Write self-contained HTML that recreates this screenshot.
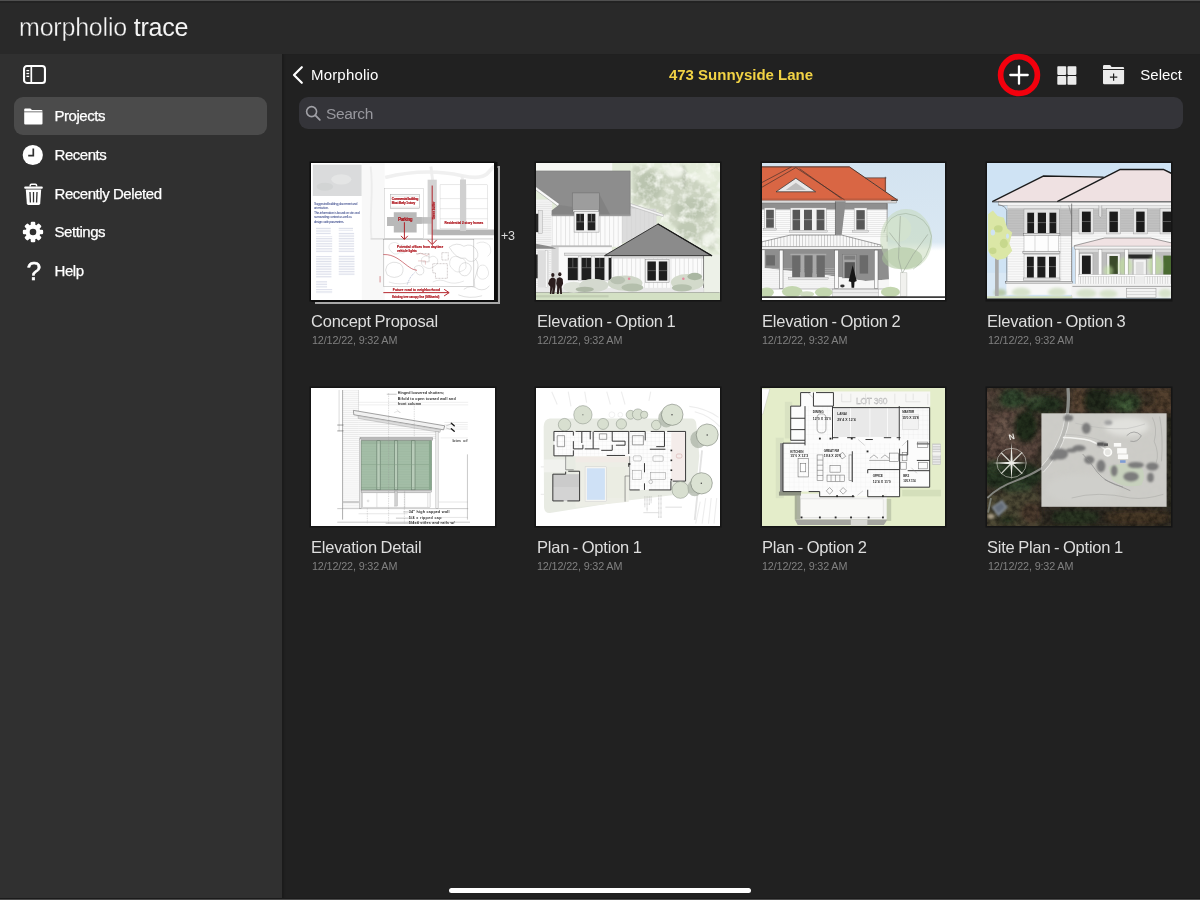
<!DOCTYPE html>
<html lang="en">
<head>
<meta charset="utf-8">
<title>Morpholio Trace - 473 Sunnyside Lane</title>
<style>
html,body{margin:0;padding:0;}
body{width:1200px;height:900px;overflow:hidden;background:#212121;font-family:"Liberation Sans",Arial,sans-serif;color:#fff;position:relative;-webkit-font-smoothing:antialiased;}
.abs{position:absolute;}
#topbar{left:0;top:0;width:1200px;height:53.5px;background:#292929;}
#topline{left:0;top:0;width:1200px;height:1px;background:#505050;box-shadow:0 1.5px 0 0.5px #232323;}
#botline{left:0;top:899px;width:1200px;height:1px;background:#4c4c4c;box-shadow:0 -1px 0 0 #1b1b1b;}
#brand{left:19px;top:11.5px;font-size:25px;line-height:30px;color:#f4f4f4;white-space:nowrap;letter-spacing:-0.2px;}
#brand .l{-webkit-text-stroke:0.36px #292929;}
#brand .r{}
#sidebar{left:0;top:53.5px;width:281.5px;height:847px;background:#303030;}
#sel{left:14px;top:97px;width:253px;height:38px;border-radius:9px;background:#4b4b4b;}
.navt{left:54.5px;font-size:15px;line-height:20px;color:#fff;white-space:nowrap;letter-spacing:-0.45px;-webkit-text-stroke:0.25px #fff;}
#main{left:281.5px;top:53.5px;width:919px;height:847px;background:#212121;box-shadow:inset 3px 0 2px -1px #1c1c1c;}
#back{left:311px;top:65px;font-size:15px;line-height:20px;color:#fff;letter-spacing:0.18px;}
#title{left:591px;top:65px;width:300px;text-align:center;font-size:15px;line-height:20px;font-weight:bold;color:#f2d345;white-space:nowrap;}
#select{left:1140.3px;top:65px;font-size:15px;line-height:20px;color:#fff;}
#search{left:299px;top:97.25px;width:883.5px;height:31.6px;border-radius:9px;background:#343439;}
#searcht{left:326px;top:104px;font-size:15.5px;line-height:20px;color:#98989e;letter-spacing:-0.35px;}
.thumb{width:183.5px;height:137.5px;overflow:hidden;background:#fff;box-shadow:0 0 0 1.5px #151515;}
#t1{width:183px;box-shadow:0 0 0 1.5px #0c0c0c,2px 0.5px 0 1.5px #0c0c0c;}
#stack{left:315px;top:166.25px;width:181px;height:133.5px;border:2px solid #a8a8a8;box-sizing:content-box;}
.thumb svg{display:block;width:100%;height:100%;}
.ttl{font-size:16.5px;line-height:20px;color:#dedede;white-space:nowrap;letter-spacing:-0.22px;word-spacing:-0.7px;}
.dt{font-size:10.8px;line-height:14px;color:#808080;white-space:nowrap;letter-spacing:-0.14px;margin-top:-0.5px;}
#home{left:449px;top:888px;width:302px;height:5px;border-radius:3px;background:#fff;}
</style>
</head>
<body>
<div id="wrap" style="position:absolute;left:0;top:0;width:1200px;height:900px;will-change:transform;">
<div id="topbar" class="abs"></div>
<div id="topline" class="abs"></div>
<div id="brand" class="abs"><span class="l">morpholio</span> <span class="r">trace</span></div>
<div id="sidebar" class="abs"></div>
<div id="main" class="abs"></div>

<!-- sidebar -->
<svg class="abs" style="left:23px;top:65px" width="24" height="20" viewBox="0 0 24 20">
  <rect x="1.05" y="1.05" width="20.9" height="16.9" rx="2.8" fill="none" stroke="#fff" stroke-width="2.1"/>
  <line x1="8.3" y1="1" x2="8.3" y2="18" stroke="#fff" stroke-width="1.7"/>
  <line x1="3.4" y1="5.6" x2="6.2" y2="5.6" stroke="#fff" stroke-width="1.3"/>
  <line x1="3.4" y1="8.5" x2="6.2" y2="8.5" stroke="#fff" stroke-width="1.3"/>
  <line x1="3.4" y1="11.4" x2="6.2" y2="11.4" stroke="#fff" stroke-width="1.3"/>
</svg>
<div id="sel" class="abs"></div>
<!-- folder -->
<svg class="abs" style="left:23px;top:107px" width="21" height="19" viewBox="0 0 21 19">
  <path d="M1.2 2.5 Q1.2 1.4 2.3 1.4 H7 Q7.8 1.4 8.2 2.1 L8.7 3 H18.4 Q19.5 3 19.5 4.1 V4.4 H1.2 Z" fill="#fff"/>
  <path d="M1.2 5.3 H19.5 V16.4 Q19.5 17.5 18.4 17.5 H2.3 Q1.2 17.5 1.2 16.4 Z" fill="#fff"/>
</svg>
<div class="abs navt" style="top:106px">Projects</div>
<!-- clock -->
<svg class="abs" style="left:22.2px;top:143.7px" width="22" height="22" viewBox="0 0 22 22">
  <circle cx="10.8" cy="11" r="10.1" fill="#fff"/>
  <path d="M11.3 4.5 V11.6 H6.2" fill="none" stroke="#303030" stroke-width="1.7"/>
</svg>
<div class="abs navt" style="top:145px">Recents</div>
<!-- trash -->
<svg class="abs" style="left:22.8px;top:182.8px" width="22" height="24" viewBox="0 0 22 24">
  <path d="M7.2 3.6 V2.6 Q7.2 1.3 8.5 1.3 H12.3 Q13.6 1.3 13.6 2.6 V3.6" fill="none" stroke="#fff" stroke-width="1.5"/>
  <rect x="1.2" y="3.4" width="18.6" height="2.4" rx="1" fill="#fff"/>
  <path d="M2.8 6.6 H18.2 L17.2 20.6 Q17.1 22 15.7 22 H5.3 Q3.9 22 3.8 20.6 Z" fill="#fff"/>
  <line x1="7" y1="9" x2="7.4" y2="19.4" stroke="#303030" stroke-width="1.3"/>
  <line x1="10.5" y1="9" x2="10.5" y2="19.4" stroke="#303030" stroke-width="1.3"/>
  <line x1="14" y1="9" x2="13.6" y2="19.4" stroke="#303030" stroke-width="1.3"/>
</svg>
<div class="abs navt" style="top:183.5px">Recently Deleted</div>
<!-- gear -->
<svg class="abs" style="left:21.3px;top:220.3px" width="24" height="24" viewBox="-12 -12 24 24">
  <g fill="#fff">
    <circle r="7.4"/>
    <g id="teeth">
      <rect x="-2.3" y="-10.15" width="4.6" height="20.3" rx="1.2"/>
      <rect x="-2.3" y="-10.15" width="4.6" height="20.3" rx="1.2" transform="rotate(45)"/>
      <rect x="-2.3" y="-10.15" width="4.6" height="20.3" rx="1.2" transform="rotate(90)"/>
      <rect x="-2.3" y="-10.15" width="4.6" height="20.3" rx="1.2" transform="rotate(135)"/>
    </g>
  </g>
  <circle r="3.3" fill="#303030"/>
</svg>
<div class="abs navt" style="top:222px">Settings</div>
<!-- help -->
<div class="abs" style="left:26.5px;top:255.5px;font-size:26.5px;line-height:30px;color:#fff;-webkit-text-stroke:0.5px #fff;">?</div>
<div class="abs navt" style="top:261px">Help</div>

<!-- main header -->
<svg class="abs" style="left:291px;top:65px" width="14" height="20" viewBox="0 0 14 20">
  <path d="M10.8 2.2 L3 10 L10.8 17.8" fill="none" stroke="#fff" stroke-width="2.2" stroke-linecap="round" stroke-linejoin="round"/>
</svg>
<div id="back" class="abs">Morpholio</div>
<div id="title" class="abs">473 Sunnyside Lane</div>
<!-- plus with red ring -->
<svg class="abs" style="left:995.75px;top:52px" width="46" height="46" viewBox="0 0 46 46">
  <circle cx="23" cy="23" r="18.4" fill="none" stroke="#f3000d" stroke-width="5.7"/>
  <path d="M23 14.3 V31.7 M14.3 23 H31.7" stroke="#fff" stroke-width="2.3" stroke-linecap="round"/>
</svg>
<!-- grid icon -->
<svg class="abs" style="left:1056.5px;top:65.5px" width="20" height="19" viewBox="0 0 20 19">
  <rect x="0.3" y="0.3" width="8.9" height="8.6" rx="0.8" fill="#ebebeb"/>
  <rect x="10.5" y="0.3" width="8.9" height="8.6" rx="0.8" fill="#ebebeb"/>
  <rect x="0.3" y="10.1" width="8.9" height="8.6" rx="0.8" fill="#ebebeb"/>
  <rect x="10.5" y="10.1" width="8.9" height="8.6" rx="0.8" fill="#ebebeb"/>
</svg>
<!-- folder plus -->
<svg class="abs" style="left:1102px;top:64px" width="23" height="21" viewBox="0 0 23 21">
  <path d="M1 2.4 Q1 1.1 2.3 1.1 H7.6 Q8.4 1.1 8.8 1.8 L9.5 3 H20.8 Q22.1 3 22.1 4.3 V4.9 H1 Z" fill="#ebebeb"/>
  <path d="M1 5.9 H22.1 V18.9 Q22.1 20.2 20.8 20.2 H2.3 Q1 20.2 1 18.9 Z" fill="#ebebeb"/>
  <path d="M11.6 9.4 V16.8 M7.9 13.1 H15.3" stroke="#212121" stroke-width="1.2"/>
</svg>
<div id="select" class="abs">Select</div>

<!-- search -->
<div id="search" class="abs"></div>
<svg class="abs" style="left:305px;top:105px" width="17" height="17" viewBox="0 0 17 17">
  <circle cx="6.6" cy="6.6" r="5" fill="none" stroke="#a0a0a6" stroke-width="1.6"/>
  <line x1="10.4" y1="10.4" x2="14.8" y2="14.8" stroke="#a0a0a6" stroke-width="1.8" stroke-linecap="round"/>
</svg>
<div id="searcht" class="abs">Search</div>

<!-- THUMBS -->
<div id="stack" class="abs"></div>
<!--T1--><div class="abs thumb" id="t1" style="left:311.25px;top:162.5px"><svg preserveAspectRatio="none" viewBox="34.2 40.9 1000.9 750" font-family="Liberation Sans, sans-serif">
<defs>
<pattern id="p1l" width="100" height="9" patternUnits="userSpaceOnUse"><rect width="100" height="4.5" fill="#dde0eb"/></pattern>
</defs>
<rect x="0" y="0" width="1100" height="850" fill="#fff"/>
<rect x="312" y="0" width="125" height="850" fill="#f8f8f8"/>
<!-- faint top roads -->
<path d="M440 120 C560 90 700 75 860 110 S1000 70 1040 60" fill="none" stroke="#f0f0f0" stroke-width="20"/>
<path d="M690 60 L700 140 M860 110 L866 150" fill="none" stroke="#eeeeee" stroke-width="16"/>
<path d="M360 60 C380 200 350 330 365 450" fill="none" stroke="#ececec" stroke-width="10"/>
<!-- grey photo box -->
<rect x="44" y="50" width="267" height="171" fill="#dadbdc"/>
<ellipse cx="200" cy="130" rx="55" ry="28" fill="#e4e5e5"/>
<ellipse cx="110" cy="170" rx="45" ry="22" fill="#d2d4d4"/>
<!-- blue heading -->
<g fill="#2a3a80" font-size="19">
<text x="50" y="270" textLength="238">Suggested building placement and</text>
<text x="50" y="294" textLength="82">orientation.</text>
<text x="50" y="319" textLength="250">This information is based on site and</text>
<text x="50" y="343" textLength="208">surrounding context as well as</text>
<text x="50" y="367" textLength="165">design code parameters.</text>
</g>
<!-- text columns -->
<g fill="url(#p1l)">
<rect x="62" y="392" width="80" height="38"/><rect x="62" y="440" width="88" height="92"/><rect x="62" y="548" width="84" height="120"/><rect x="62" y="682" width="60" height="40"/><rect x="62" y="728" width="88" height="24"/>
<rect x="186" y="392" width="78" height="20"/><rect x="186" y="420" width="84" height="110"/><rect x="186" y="545" width="86" height="112"/>
</g>
<!-- roads -->
<rect x="672" y="132" width="50" height="300" fill="#d3d3d3"/>
<rect x="850" y="132" width="32" height="280" fill="#d0d0d0"/>
<rect x="700" y="404" width="360" height="31" fill="#b6b6b6"/>
<rect x="600" y="336" width="95" height="36" fill="#c2c2c2"/>
<!-- plan outline -->
<rect x="436" y="180" width="214" height="272" fill="none" stroke="#b5b5b5" stroke-width="2"/>
<line x1="360" y1="455" x2="1030" y2="455" stroke="#9a9a9a" stroke-width="2.5"/>
<!-- parking -->
<path d="M487 310 H612 V336 H640 V372 H612 V420 H487 V385 H450 V336 H487 Z" fill="#b9b9b9"/>
<!-- building -->
<rect x="470" y="212" width="157" height="78" fill="#fff" stroke="#9c9c9c" stroke-width="2.5"/>
<g stroke="#aaa" stroke-width="1.5"><line x1="470" y1="222" x2="627" y2="222"/><line x1="470" y1="282" x2="627" y2="282"/></g>
<!-- residential grid -->
<g fill="#fff" stroke="#c2c2c2" stroke-width="2">
<rect x="740" y="160" width="110" height="240"/><rect x="882" y="160" width="118" height="240"/>
</g>
<g stroke="#c6c6c6" stroke-width="2">
<line x1="740" y1="235" x2="1000" y2="235"/><line x1="740" y1="290" x2="1000" y2="290"/><line x1="740" y1="345" x2="1000" y2="345"/>
</g>
<rect x="850" y="132" width="32" height="280" fill="#d0d0d0"/>
<!-- site boundary -->
<rect x="432" y="458" width="493" height="257" fill="none" stroke="#8f8f8f" stroke-width="2"/>
<!-- tree outlines -->
<g fill="none" stroke="#b4b4b4" stroke-width="2.2">
<path d="M850 600 q20 -25 45 -10 q25 15 10 45 q-15 30 -45 18 q-25 -15 -10 -53z"/>
<path d="M790 500 q40 -30 80 -5 q45 -20 70 20 q20 40 -15 60 q-30 10 -45 -15 q-50 10 -90 -60z"/>
<path d="M450 600 q30 -30 70 -10 q30 20 10 60 q-40 30 -80 0 q-15 -25 0 -50z"/>
<path d="M600 610 q25 -20 45 0 q15 25 -5 40 q-30 10 -40 -40z"/>
<path d="M870 730 q40 -30 80 0 q40 10 60 -20 M840 760 q60 25 130 5"/>
<path d="M930 560 q30 30 10 80 q-20 40 -10 80"/>
</g>
<g fill="none" stroke="#bdbdbd" stroke-width="2">
<path d="M470 480 q30 -15 50 10 q30 -10 40 20 q-10 30 -40 20 q-30 20 -50 -10 q-20 -20 0 -40z"/>
<path d="M640 560 q20 -20 45 -5 q25 -15 40 10 q10 30 -20 40 q-20 20 -45 5 q-30 -10 -20 -50z"/>
<path d="M800 560 q25 -20 50 0 q30 0 30 30 q10 30 -20 40 q-30 15 -50 -10 q-30 -20 -10 -60z"/>
<path d="M960 600 q30 -10 40 20 q15 30 -10 50 q-30 15 -45 -15 q-10 -35 15 -55z"/>
<path d="M700 690 q40 -20 80 0 q40 15 90 -5 M460 690 q60 20 120 0"/>
<path d="M940 480 q40 -20 70 10 q20 40 -10 60"/>
</g>
<g fill="none" stroke="#a33" stroke-width="2" opacity="0.7"><path d="M612 540 q20 -14 40 0 q16 12 30 -4 M620 575 h40 v20"/></g>
<g fill="none" stroke="#7a6a6a" stroke-width="2" stroke-dasharray="5 3">
<path d="M700 590 H780 V670 H715 V640 H700 Z"/><path d="M610 535 H680 V580 H640"/><path d="M750 530 h35 v40 h-35z"/>
</g>
<path d="M600 640 Q575 660 560 705" fill="none" stroke="#6a78a8" stroke-width="2.5" stroke-dasharray="6 4"/>
<!-- red annotations -->
<g fill="none" stroke="#ad1119" stroke-width="5" stroke-linecap="round" stroke-linejoin="round">
<path d="M545 366 V454 M528 440 L545 458 L562 440"/>
<path d="M697 166 V482 M674 462 L697 486 L720 462"/>
<path d="M432 748 H784 M764 731 L790 748 L764 765"/>
<path d="M432 540 C490 538 525 575 562 602 S600 620 612 626" stroke-width="3"/>
<path d="M412 660 V690" stroke-width="2.5"/>
</g>
<g fill="#ad1119" stroke="#ad1119" stroke-width="0.9" font-weight="bold">
<text x="476" y="241" font-size="17" textLength="146">Commercial building</text>
<text x="476" y="265" font-size="17" textLength="128">Most likely 1 story</text>
<text x="510" y="356" font-size="25" textLength="80">Parking</text>
<text transform="translate(714 348) rotate(-90)" font-size="16" textLength="96">Green buffer</text>
<text x="764" y="372" font-size="17" textLength="212">Residential 2 story homes</text>
<text x="505" y="504" font-size="17" textLength="252">Potential offices from daytime</text>
<text x="505" y="529" font-size="17" textLength="108">vehicle lights</text>
<text x="482" y="741" font-size="18" textLength="258">Future road to neighborhood</text>
<text x="478" y="778" font-size="14" textLength="258">Existing tree canopy line (GIS/aerial)</text>
</g>
</svg></div>
<!--T2--><div class="abs thumb" id="t2" style="left:536.25px;top:162.5px"><svg preserveAspectRatio="none" viewBox="34.2 40.9 1000.9 750">
<defs>
<pattern id="p2v" width="24" height="10" patternUnits="userSpaceOnUse"><rect x="0" width="3" height="10" fill="#d2d2d2"/></pattern>
<pattern id="p2h" width="10" height="12" patternUnits="userSpaceOnUse"><rect y="0" width="10" height="2.5" fill="#dadada"/></pattern>
<filter id="b2" x="-10%" y="-10%" width="120%" height="120%"><feGaussianBlur stdDeviation="9"/></filter>
<filter id="b2s" x="-10%" y="-10%" width="120%" height="120%"><feGaussianBlur stdDeviation="3"/></filter>
<filter id="n2" x="0" y="0" width="100%" height="100%"><feTurbulence type="fractalNoise" baseFrequency="0.022" numOctaves="3" seed="11" result="t"/><feColorMatrix in="t" type="matrix" values="0 0 0 0 0.93  0 0 0 0 0.95  0 0 0 0 0.89  2.4 0 0 0 -1.05"/></filter>
<clipPath id="c2"><path d="M552 40 H1050 V560 L992 546 L700 374 L730 322 L552 262 Z"/></clipPath>
</defs>
<!-- background foliage -->
<rect x="0" y="0" width="1100" height="850" fill="#e3ebd9"/>
<rect x="30" y="40" width="420" height="45" fill="#f7f8f4"/>
<g filter="url(#b2)">
<path d="M560 60 Q640 40 720 90 Q800 60 860 120 Q960 130 1000 220 Q1040 300 1000 380 Q1040 460 1000 520 L900 470 L780 380 L700 300 L560 260 Z" fill="#cbd3c0"/>
<ellipse cx="650" cy="170" rx="70" ry="80" fill="#bac4af"/>
<ellipse cx="880" cy="290" rx="90" ry="60" fill="#bcc6b1"/>
<ellipse cx="860" cy="410" rx="60" ry="50" fill="#bfc9b4"/>
<ellipse cx="790" cy="90" rx="50" ry="30" fill="#eef2e8"/>
<ellipse cx="960" cy="120" rx="50" ry="40" fill="#e9efe0"/>
<ellipse cx="980" cy="450" rx="40" ry="30" fill="#eef2e8"/>
<path d="M830 50 L850 100 L835 180" fill="none" stroke="#aab3a0" stroke-width="14"/>
</g>
<g clip-path="url(#c2)"><rect x="540" y="30" width="520" height="540" filter="url(#n2)"/></g>
<rect x="940" y="540" width="110" height="210" fill="#edf1e8"/>
<!-- right shaded wall behind -->
<path d="M500 270 L555 262 L730 322 L690 330 L690 400 L500 480 Z" fill="#d0d0d0"/>
<path d="M500 290 H690 V470 H500 Z" fill="#dcdcdc"/>
<rect x="500" y="290" width="190" height="180" fill="url(#p2v)" opacity="0.9"/>
<path d="M548 262 L730 322 L728 334 L548 276 Z" fill="#f4f4f4" stroke="#9a9a9a" stroke-width="2"/>
<!-- left wall -->
<rect x="30" y="240" width="92" height="490" fill="#f3f3f3"/>
<rect x="30" y="240" width="92" height="490" fill="url(#p2h)"/>
<!-- upper wall -->
<rect x="118" y="322" width="384" height="176" fill="#fbfbfb"/>
<rect x="118" y="322" width="384" height="176" fill="url(#p2v)"/>
<!-- lower wall left -->
<rect x="118" y="498" width="330" height="240" fill="#fafafa"/>
<rect x="118" y="498" width="40" height="240" fill="#d9d9d9"/>
<rect x="118" y="490" width="330" height="10" fill="#bdbdbd"/>
<rect x="190" y="532" width="230" height="14" fill="#e2e2e2" stroke="#8a8a8a" stroke-width="2"/>
<!-- main roof -->
<path d="M30 84 H548 V326 H120 L120 300 L160 268 L30 172 Z" fill="#8d8d8d"/>
<path d="M120 300 L160 270 L380 300 L380 326 H120 Z" fill="#7f7f7f" opacity="0.6"/>
<path d="M380 210 L440 326 H380 Z" fill="#7a7a7a" opacity="0.55"/>
<path d="M30 84 H548 V326" fill="none" stroke="#777" stroke-width="3"/>
<rect x="120" y="322" width="430" height="9" fill="#9b9b9b"/>
<!-- left gable fascia -->
<path d="M30 168 L162 264 L152 276 L30 186 Z" fill="#fafafa" stroke="#666" stroke-width="2"/>
<!-- dormer -->
<rect x="232" y="204" width="148" height="98" fill="#9d9d9d" stroke="#6f6f6f" stroke-width="3"/>
<rect x="236" y="296" width="140" height="12" fill="#e8e8e8" stroke="#777" stroke-width="2"/>
<!-- upper window -->
<rect x="242" y="306" width="136" height="112" fill="#f2f2f2" stroke="#8a8a8a" stroke-width="2.5"/>
<rect x="254" y="318" width="42" height="90" fill="#222"/>
<rect x="316" y="318" width="42" height="90" fill="#222"/>
<g stroke="#bdbdbd" stroke-width="2.5"><line x1="254" y1="362" x2="296" y2="362"/><line x1="316" y1="362" x2="358" y2="362"/><line x1="275" y1="318" x2="275" y2="360"/><line x1="337" y1="318" x2="337" y2="360"/></g>
<!-- left edge dark windows -->
<rect x="30" y="318" width="18" height="100" fill="#2a2a2a"/>
<rect x="30" y="540" width="14" height="130" fill="#2a2a2a"/>
<rect x="48" y="300" width="22" height="125" fill="#e6e6e6" stroke="#999" stroke-width="2"/>
<!-- left porch bits -->
<path d="M30 480 L120 498 L145 508 L30 508 Z" fill="#8a8a8a"/>
<rect x="44" y="520" width="60" height="200" fill="#dedede"/>
<rect x="84" y="520" width="14" height="200" fill="#f7f7f7" stroke="#aaa" stroke-width="1.5"/>
<!-- lower left windows -->
<g fill="#1f1f1f">
<rect x="208" y="558" width="54" height="122"/><rect x="282" y="558" width="54" height="122"/><rect x="356" y="558" width="52" height="122"/><rect x="430" y="558" width="16" height="122"/>
</g>
<g stroke="#9a9a9a" stroke-width="2.5"><line x1="208" y1="612" x2="262" y2="612"/><line x1="282" y1="612" x2="336" y2="612"/><line x1="356" y1="612" x2="408" y2="612"/><line x1="235" y1="558" x2="235" y2="610"/><line x1="309" y1="558" x2="309" y2="610"/><line x1="382" y1="558" x2="382" y2="610"/></g>
<g fill="#f0f0f0" stroke="#999" stroke-width="1.5"><rect x="264" y="552" width="16" height="132"/><rect x="338" y="552" width="16" height="132"/><rect x="410" y="552" width="18" height="132"/></g>
<!-- lower right wall -->
<rect x="446" y="548" width="504" height="196" fill="#fbfbfb"/>
<rect x="446" y="548" width="504" height="196" fill="url(#p2v)"/>
<rect x="446" y="548" width="504" height="14" fill="#d6d6d6"/>
<line x1="948" y1="548" x2="948" y2="745" stroke="#555" stroke-width="4"/>
<line x1="446" y1="552" x2="446" y2="700" stroke="#666" stroke-width="3"/>
<!-- lower roof -->
<path d="M408 546 L700 374 L992 546 Z" fill="#8b8b8b" stroke="#2c2c2c" stroke-width="5" stroke-linejoin="round"/>
<path d="M700 374 L992 546" stroke="#1c1c1c" stroke-width="7" stroke-linecap="round"/>
<!-- lower right window -->
<rect x="630" y="566" width="130" height="126" fill="#f1f1f1" stroke="#8a8a8a" stroke-width="2.5"/>
<rect x="642" y="578" width="46" height="104" fill="#1f1f1f"/>
<rect x="704" y="578" width="46" height="104" fill="#1f1f1f"/>
<g stroke="#9a9a9a" stroke-width="2.5"><line x1="642" y1="628" x2="688" y2="628"/><line x1="704" y1="628" x2="750" y2="628"/></g>
<!-- base -->
<rect x="30" y="722" width="920" height="26" fill="#e9e9e9"/>
<line x1="30" y1="748" x2="1036" y2="748" stroke="#8f9688" stroke-width="4"/>
<!-- ground -->
<rect x="30" y="750" width="1020" height="50" fill="#d3e0c4"/>
<rect x="30" y="762" width="400" height="12" fill="#b9c4ac" opacity="0.7"/>
<!-- bushes -->
<g filter="url(#b2s)">
<ellipse cx="240" cy="718" rx="58" ry="30" fill="#dfe3da"/>
<ellipse cx="350" cy="708" rx="80" ry="36" fill="#d4d9cf"/>
<ellipse cx="520" cy="696" rx="95" ry="42" fill="#cfd6c8"/>
<ellipse cx="480" cy="680" rx="40" ry="22" fill="#b9c2b2"/>
<ellipse cx="560" cy="720" rx="60" ry="22" fill="#b4bfac"/>
<ellipse cx="860" cy="692" rx="90" ry="46" fill="#d3dacb"/>
<ellipse cx="900" cy="660" rx="40" ry="20" fill="#aab7a2"/>
<ellipse cx="830" cy="722" rx="55" ry="20" fill="#b5c0ad"/>
<circle cx="542" cy="672" r="7" fill="#e48aa0"/><circle cx="838" cy="672" r="7" fill="#e48aa0"/>
<ellipse cx="300" cy="730" rx="50" ry="14" fill="#aeb8a6"/>
</g>
<!-- people -->
<g fill="#2b1d1d">
<ellipse cx="126" cy="652" rx="9" ry="11"/><path d="M108 676 Q126 656 142 676 L140 716 L134 756 H122 L124 716 L118 756 H110 L112 716 L100 700 Z"/>
<ellipse cx="164" cy="648" rx="9" ry="11"/><path d="M148 672 Q164 654 180 674 L182 700 L174 716 L176 756 H166 L164 720 L158 756 H148 L150 716 L144 700 Z"/>
</g>
</svg></div>
<!--T3--><div class="abs thumb" id="t3" style="left:761.5px;top:162.5px"><svg preserveAspectRatio="none" viewBox="35.4 40.9 1000.9 750">
<defs>
<pattern id="p3h" width="10" height="11" patternUnits="userSpaceOnUse"><rect width="10" height="2.2" fill="#d8d8d8"/></pattern>
<pattern id="p3v" width="17" height="10" patternUnits="userSpaceOnUse"><rect width="3" height="10" fill="#b5b5b5"/></pattern>
<linearGradient id="g3s" x1="0" y1="0" x2="0" y2="1"><stop offset="0" stop-color="#d3e3f0"/><stop offset="0.9" stop-color="#dae8f3"/><stop offset="1" stop-color="#fff"/></linearGradient>
<filter id="b3" x="-10%" y="-10%" width="120%" height="120%"><feGaussianBlur stdDeviation="4"/></filter>
</defs>
<rect x="0" y="0" width="1100" height="850" fill="#fff"/>
<rect x="30" y="40" width="1020" height="480" fill="url(#g3s)"/>
<!-- upper wall -->
<rect x="30" y="245" width="690" height="260" fill="#fbfbfb"/>
<rect x="30" y="245" width="690" height="200" fill="url(#p3h)"/>
<rect x="30" y="245" width="690" height="50" fill="#8f8f8f"/>
<rect x="30" y="245" width="740" height="14" fill="#d9d9d9" stroke="#666" stroke-width="2"/>
<path d="M436 250 H492 L470 432 H436 Z" fill="#8c8c8c"/>
<line x1="436" y1="250" x2="436" y2="440" stroke="#444" stroke-width="3"/>
<line x1="718" y1="262" x2="718" y2="470" stroke="#555" stroke-width="3"/>
<!-- roof -->
<path d="M30 60 H512 L776 244 H30 Z" fill="#d96644"/>
<path d="M600 122 H712 V200 Z" fill="#d96644"/>
<path d="M598 122 H714 M708 116 V196" stroke="#3a3a3a" stroke-width="3.5" fill="none"/>
<path d="M30 62 H512 L776 244 L740 246" fill="none" stroke="#2e2a28" stroke-width="4.5" stroke-linejoin="round"/>
<path d="M30 176 L220 66 L486 242 M30 150 L196 62 M240 72 L470 236" fill="none" stroke="#3a2e2a" stroke-width="3.5"/>
<path d="M30 238 H776" stroke="#8a4a38" stroke-width="3"/>
<!-- dormer vent -->
<path d="M112 198 L220 124 L328 198 Z" fill="#e8e8e8" stroke="#333" stroke-width="4" stroke-linejoin="round"/>
<path d="M165 188 L220 148 L276 188 Z" fill="#bdbdbd"/>
<!-- upper windows -->
<g fill="#f4f4f4" stroke="#8d8d8d" stroke-width="2">
<rect x="48" y="286" width="60" height="118"/><rect x="190" y="286" width="196" height="124"/><rect x="538" y="286" width="70" height="128"/>
</g>
<g fill="#575757">
<rect x="58" y="296" width="42" height="98"/><rect x="202" y="296" width="42" height="112"/><rect x="264" y="296" width="44" height="112"/><rect x="332" y="296" width="44" height="112"/><rect x="550" y="298" width="46" height="106"/>
</g>
<g stroke="#c8c8c8" stroke-width="3"><line x1="58" y1="345" x2="100" y2="345"/><line x1="202" y1="350" x2="376" y2="350"/><line x1="550" y1="350" x2="596" y2="350"/></g>
<g fill="#f4f4f4"><rect x="244" y="296" width="20" height="112"/><rect x="308" y="296" width="24" height="112"/></g>
<rect x="186" y="408" width="206" height="10" fill="#e3e3e3" stroke="#888" stroke-width="1.5"/>
<rect x="528" y="408" width="90" height="10" fill="#e3e3e3" stroke="#888" stroke-width="1.5"/>
<rect x="44" y="398" width="70" height="9" fill="#e3e3e3" stroke="#888" stroke-width="1.5"/>
<!-- porch shadow wall -->
<path d="M30 508 H722 L728 676 L600 684 L380 652 L30 612 Z" fill="#8e8e8e"/>
<path d="M30 612 L380 652 L600 684 L728 676 V730 H30 Z" fill="#f6f6f6"/>
<rect x="30" y="612" width="420" height="110" fill="url(#p3h)" opacity="0.8"/>
<!-- lower windows -->
<g fill="#6a6a6a">
<rect x="58" y="544" width="48" height="56"/><rect x="200" y="544" width="46" height="122"/><rect x="266" y="544" width="46" height="122"/><rect x="332" y="544" width="46" height="122"/><rect x="568" y="544" width="46" height="100"/>
</g>
<g fill="#a9a9a9"><rect x="246" y="540" width="20" height="126"/><rect x="312" y="540" width="20" height="126"/><rect x="190" y="536" width="196" height="8"/></g>
<rect x="180" y="664" width="216" height="14" fill="#e6e6e6" stroke="#888" stroke-width="1.5"/>
<rect x="476" y="540" width="74" height="128" fill="#a2a2a2" stroke="#707070" stroke-width="2"/>
<rect x="486" y="582" width="56" height="86" fill="#585858"/>
<rect x="484" y="546" width="60" height="22" fill="#7d7d7d"/>
<!-- porch roof -->
<path d="M30 472 L190 434 H470 L690 490 V506 H30 Z" fill="#f8f8f8"/>
<path d="M30 472 L190 434 H470 L690 490 V498 H30 Z" fill="url(#p3v)"/>
<path d="M30 472 L190 434 H470 L690 490" fill="none" stroke="#555" stroke-width="3"/>
<rect x="30" y="496" width="662" height="16" fill="#efefef" stroke="#666" stroke-width="2.5"/>
<!-- columns -->
<g fill="#fafafa" stroke="#5f5f5f" stroke-width="2.5">
<rect x="130" y="516" width="20" height="210"/><rect x="432" y="516" width="20" height="210"/><rect x="648" y="516" width="20" height="210"/>
</g>
<rect x="36" y="516" width="14" height="100" fill="#f5f5f5"/>
<!-- person -->
<path d="M530 598 L552 684 L540 690 L538 722 H524 L522 690 L508 686 Z" fill="#161616"/>
<ellipse cx="474" cy="712" rx="12" ry="8" fill="#333"/>
<!-- steps -->
<rect x="420" y="728" width="252" height="44" fill="#ededed" stroke="#9a9a9a" stroke-width="2"/>
<line x1="420" y1="748" x2="672" y2="748" stroke="#aaa" stroke-width="2"/>
<line x1="30" y1="728" x2="730" y2="728" stroke="#777" stroke-width="2.5"/>
<!-- tree -->
<g>
<ellipse cx="822" cy="458" rx="142" ry="166" fill="#c4d8b6" opacity="0.5"/>
<ellipse cx="800" cy="560" rx="110" ry="60" fill="#a9c399" opacity="0.55" filter="url(#b3)"/>
<ellipse cx="780" cy="400" rx="70" ry="70" fill="#d5e4cc" opacity="0.6" filter="url(#b3)"/>
<path d="M700 420 Q720 320 820 316 Q940 330 960 440 Q950 560 860 620" fill="none" stroke="#8fa08a" stroke-width="3" opacity="0.8"/>
<path d="M800 770 L800 640 L780 560 L790 330 M802 640 L860 540 L940 430 M792 500 L730 420" fill="none" stroke="#9aa596" stroke-width="4" opacity="0.85"/>
<rect x="792" y="640" width="34" height="130" fill="#f1f1ee" stroke="#a5a9a0" stroke-width="2"/>
</g>
<!-- bushes -->
<g fill="#c3d6af" filter="url(#b3)">
<ellipse cx="62" cy="746" rx="38" ry="26"/><ellipse cx="200" cy="742" rx="56" ry="30"/><ellipse cx="372" cy="746" rx="48" ry="26"/><ellipse cx="736" cy="744" rx="52" ry="28"/>
<ellipse cx="280" cy="756" rx="40" ry="16" fill="#cfdcc0"/>
</g>
<!-- bottom line -->
<rect x="30" y="768" width="1020" height="9" fill="#2a2a2a"/>
<rect x="30" y="777" width="1020" height="20" fill="#fcfcfc"/>
</svg></div>
<!--T4--><div class="abs thumb" id="t4" style="left:987px;top:162.5px"><svg preserveAspectRatio="none" viewBox="38.2 40.9 1000.9 750">
<defs>
<pattern id="p4h" width="10" height="9" patternUnits="userSpaceOnUse"><rect width="10" height="2" fill="#d9d9d9"/></pattern>
<pattern id="p4g" width="10" height="9" patternUnits="userSpaceOnUse"><rect width="10" height="2" fill="#a9a9a9"/></pattern>
<pattern id="p4r" width="14" height="10" patternUnits="userSpaceOnUse"><rect width="3" height="10" fill="#bdbdbd"/></pattern>
<filter id="b4" x="-20%" y="-20%" width="140%" height="140%"><feGaussianBlur stdDeviation="9"/></filter>
</defs>
<rect x="0" y="0" width="1100" height="850" fill="#cfe3f4"/>
<rect x="30" y="640" width="130" height="140" fill="#d9e8f5"/>
<!-- upper wall grey -->
<rect x="150" y="262" width="900" height="180" fill="#c2c2c2"/>
<rect x="150" y="262" width="900" height="180" fill="url(#p4g)" opacity="0.7"/>
<!-- fascia -->
<rect x="100" y="250" width="950" height="22" fill="#f4f4f4" stroke="#777" stroke-width="2"/>
<rect x="150" y="272" width="900" height="16" fill="#e9e9e9"/>
<!-- lower-left wall white -->
<rect x="150" y="440" width="352" height="262" fill="#fbfbfb"/>
<rect x="150" y="440" width="352" height="262" fill="url(#p4h)"/>
<rect x="500" y="418" width="550" height="80" fill="#fafafa"/>
<rect x="500" y="418" width="550" height="40" fill="url(#p4h)"/>
<!-- downspout/left edge -->
<path d="M100 268 Q140 275 146 300 V700" fill="none" stroke="#555" stroke-width="3"/>
<line x1="500" y1="262" x2="500" y2="770" stroke="#4a4a4a" stroke-width="3.5"/>
<line x1="440" y1="272" x2="440" y2="700" stroke="#bdbdbd" stroke-width="2"/>
<!-- roofs -->
<path d="M70 250 L345 112 L672 118 L430 250 Z" fill="#efe1e2"/>
<path d="M430 250 L765 76 L1000 76 L1050 100 V250 Z" fill="#efe1e2"/>
<path d="M70 250 L345 112 L672 118" fill="none" stroke="#1a1a1a" stroke-width="8" stroke-linejoin="round" stroke-linecap="round"/>
<path d="M424 250 L765 76 L1000 76 L1050 100" fill="none" stroke="#1a1a1a" stroke-width="8" stroke-linejoin="round" stroke-linecap="round"/>
<path d="M66 253 H1050" stroke="#3a3a3a" stroke-width="5"/>
<!-- upper-left windows -->
<rect x="240" y="292" width="192" height="140" fill="#e2e2e2" stroke="#8c8c8c" stroke-width="2"/>
<g fill="#1d1d1d"><rect x="258" y="312" width="38" height="112"/><rect x="314" y="312" width="46" height="112"/><rect x="378" y="312" width="38" height="112"/></g>
<g stroke="#a6a6a6" stroke-width="2.5"><line x1="258" y1="366" x2="416" y2="366"/></g>
<g fill="#e6e6e6"><rect x="296" y="312" width="18" height="112"/><rect x="360" y="312" width="18" height="112"/></g>
<rect x="236" y="424" width="200" height="12" fill="#e4e4e4" stroke="#666" stroke-width="2.5"/>
<!-- balcony panel -->
<rect x="240" y="436" width="190" height="90" fill="#fdfdfd" stroke="#8a8a8a" stroke-width="2"/>
<g stroke="#9a9a9a" stroke-width="2"><line x1="300" y1="436" x2="300" y2="526"/><line x1="372" y1="436" x2="372" y2="526"/></g>
<rect x="234" y="522" width="202" height="14" fill="#e8e8e8" stroke="#666" stroke-width="2.5"/>
<!-- lower-left windows -->
<rect x="240" y="540" width="192" height="136" fill="#f1f1f1" stroke="#8c8c8c" stroke-width="2"/>
<g fill="#1d1d1d"><rect x="256" y="552" width="38" height="114"/><rect x="312" y="552" width="46" height="114"/><rect x="376" y="552" width="38" height="114"/></g>
<line x1="256" y1="606" x2="414" y2="606" stroke="#a6a6a6" stroke-width="2.5"/>
<g fill="#f1f1f1"><rect x="294" y="552" width="18" height="114"/><rect x="358" y="552" width="18" height="114"/></g>
<rect x="236" y="668" width="200" height="12" fill="#e4e4e4" stroke="#777" stroke-width="2"/>
<!-- upper-right windows -->
<g fill="#e4e4e4" stroke="#8c8c8c" stroke-width="2">
<rect x="540" y="288" width="80" height="140"/><rect x="690" y="288" width="78" height="140"/><rect x="836" y="288" width="78" height="140"/><rect x="982" y="288" width="70" height="140"/>
</g>
<g fill="#1b1b1b"><rect x="556" y="306" width="48" height="112"/><rect x="706" y="306" width="46" height="112"/><rect x="852" y="306" width="46" height="112"/><rect x="996" y="306" width="50" height="112"/></g>
<g stroke="#9c9c9c" stroke-width="2.5"><line x1="556" y1="360" x2="604" y2="360"/><line x1="706" y1="360" x2="752" y2="360"/><line x1="852" y1="360" x2="898" y2="360"/><line x1="996" y1="360" x2="1046" y2="360"/></g>
<path d="M648 272 V330 L656 338 L664 330 V272" fill="#e2e2e2" stroke="#777" stroke-width="2"/>
<path d="M484 272 L500 330" stroke="#777" stroke-width="3"/>
<!-- porch interior -->
<rect x="520" y="500" width="530" height="160" fill="#bdbdbd"/>
<rect x="520" y="500" width="530" height="26" fill="#dcdcdc"/>
<rect x="806" y="540" width="140" height="22" fill="#2b2b2b"/>
<g fill="#f0f0f0" stroke="#8c8c8c" stroke-width="2"><rect x="544" y="534" width="72" height="118"/><rect x="692" y="534" width="72" height="118"/></g>
<rect x="556" y="546" width="48" height="100" fill="#1d1d1d"/>
<rect x="706" y="548" width="46" height="98" fill="#3a4a2a"/>
<rect x="1000" y="546" width="50" height="106" fill="#4a6a32"/>
<rect x="836" y="566" width="70" height="130" fill="#f3f3f3" stroke="#9a9a9a" stroke-width="2"/>
<rect x="850" y="580" width="42" height="70" fill="#dedede"/>
<rect x="812" y="566" width="18" height="86" fill="#d6d6d6"/><rect x="912" y="566" width="18" height="86" fill="#d6d6d6"/>
<!-- plants on porch -->
<g filter="url(#b4)" opacity="0.55">
<ellipse cx="792" cy="606" rx="38" ry="52" fill="#bfe595"/><ellipse cx="956" cy="600" rx="40" ry="56" fill="#bfe595"/><ellipse cx="700" cy="630" rx="26" ry="30" fill="#c8e8a5"/>
</g>
<!-- porch roof -->
<path d="M514 492 L680 450 H930 L1050 478 V498 H514 Z" fill="#f0e2e3" stroke="#555" stroke-width="3" stroke-linejoin="round"/>
<rect x="514" y="494" width="540" height="16" fill="#f5f5f5" stroke="#777" stroke-width="2"/>
<!-- columns -->
<g fill="#fcfcfc" stroke="#8a8a8a" stroke-width="2">
<rect x="520" y="512" width="20" height="206"/><rect x="645" y="512" width="20" height="206"/><rect x="790" y="512" width="18" height="206"/><rect x="940" y="512" width="18" height="206"/>
</g>
<!-- railing -->
<rect x="538" y="652" width="512" height="64" fill="#f7f7f7"/>
<rect x="538" y="660" width="512" height="50" fill="url(#p4r)"/>
<rect x="538" y="650" width="512" height="8" fill="#fdfdfd" stroke="#999" stroke-width="1.5"/>
<rect x="846" y="656" width="52" height="60" fill="#ededed"/>
<!-- foundation -->
<rect x="144" y="690" width="360" height="70" fill="#f7f7f7"/>
<rect x="140" y="686" width="364" height="10" fill="#ececec" stroke="#555" stroke-width="2.5"/>
<rect x="498" y="700" width="552" height="76" fill="#f2f2f2"/>
<line x1="504" y1="714" x2="1050" y2="714" stroke="#666" stroke-width="3"/>
<!-- steps -->
<rect x="800" y="726" width="160" height="50" fill="#f3f3f3" stroke="#8a8a8a" stroke-width="2.5"/>
<g stroke="#aaa" stroke-width="2"><line x1="800" y1="742" x2="960" y2="742"/><line x1="800" y1="758" x2="960" y2="758"/></g>
<!-- bushes -->
<g fill="#d6e2ca" filter="url(#b4)">
<ellipse cx="225" cy="746" rx="52" ry="24"/><ellipse cx="420" cy="746" rx="50" ry="24"/><ellipse cx="580" cy="752" rx="55" ry="24"/><ellipse cx="700" cy="754" rx="50" ry="22"/><ellipse cx="1010" cy="752" rx="36" ry="24"/><ellipse cx="110" cy="748" rx="34" ry="20" fill="#b7c9a8"/>
</g>
<!-- left tree -->
<rect x="82" y="556" width="20" height="210" fill="#a9a9a9"/>
<g fill="#dbe7a6">
<path d="M44 320 L70 300 L96 330 L130 340 L150 400 L176 420 L160 480 L176 520 L140 560 L96 570 L60 548 L44 520 Z"/>
</g>
<g fill="#c3d588" opacity="0.8"><ellipse cx="100" cy="400" rx="24" ry="20"/><ellipse cx="130" cy="480" rx="22" ry="26"/><ellipse cx="70" cy="520" rx="20" ry="18"/></g>
<g fill="#cfe3f4"><ellipse cx="70" cy="420" rx="12" ry="16"/><ellipse cx="150" cy="440" rx="8" ry="14"/></g>
<!-- ground -->
<rect x="30" y="768" width="474" height="12" fill="#cfdcb8"/>
<rect x="30" y="780" width="1020" height="20" fill="#1c1c1c"/>
</svg></div>
<!--T5--><div class="abs thumb" id="t5" style="left:311px;top:388.25px"><svg preserveAspectRatio="none" viewBox="32.7 34 1000.9 750" font-family="Liberation Sans, sans-serif">
<defs>
<pattern id="p5h" width="10" height="11" patternUnits="userSpaceOnUse"><rect width="10" height="2" fill="#dcdcdc"/></pattern>
<pattern id="p5g" width="10" height="9" patternUnits="userSpaceOnUse"><rect width="10" height="2" fill="#93ad97"/></pattern>
</defs>
<rect x="0" y="0" width="1100" height="850" fill="#fff"/>
<!-- left column with siding -->
<rect x="206" y="45" width="88" height="646" fill="#fafafa"/>
<rect x="206" y="45" width="88" height="646" fill="url(#p5h)"/>
<line x1="205" y1="45" x2="205" y2="752" stroke="#6a6a6a" stroke-width="3"/>
<line x1="186" y1="45" x2="186" y2="270" stroke="#9a9a9a" stroke-width="2"/>
<line x1="292" y1="45" x2="292" y2="160" stroke="#bdbdbd" stroke-width="2"/>
<path d="M176 236 H210 M176 268 H210" stroke="#555" stroke-width="3"/>
<rect x="206" y="652" width="88" height="8" fill="#bdbdbd"/>
<!-- background horizontals -->
<g stroke="#d4d4d4" stroke-width="2"><line x1="292" y1="112" x2="890" y2="112"/><line x1="292" y1="126" x2="890" y2="126"/></g>
<g stroke="#cfcfcf" stroke-width="2"><line x1="760" y1="222" x2="888" y2="222"/><line x1="760" y1="234" x2="888" y2="234"/><line x1="760" y1="246" x2="888" y2="246"/><line x1="760" y1="258" x2="888" y2="258"/><line x1="740" y1="306" x2="888" y2="306"/></g>
<!-- wall below roof -->
<path d="M292 190 L724 262 V312 H292 Z" fill="#fbfbfb"/>
<path d="M292 200 L724 270 V312 H292 Z" fill="url(#p5h)"/>
<rect x="300" y="304" width="396" height="16" fill="#b9b9b9" stroke="#7a7a7a" stroke-width="2"/>
<!-- roof -->
<path d="M264 156 L762 240 L756 262 L266 180 Z" fill="#f1f1f1" stroke="#5a5a5a" stroke-width="3" stroke-linejoin="round"/>
<path d="M290 186 L740 262 L736 276 L290 200 Z" fill="#dedede" stroke="#8a8a8a" stroke-width="2"/>
<!-- posts -->
<rect x="714" y="270" width="12" height="420" fill="#f4f4f4" stroke="#8a8a8a" stroke-width="2"/>
<rect x="296" y="312" width="12" height="380" fill="#e9e9e9" stroke="#8a8a8a" stroke-width="2"/>
<!-- green shutters -->
<rect x="306" y="322" width="384" height="268" fill="#a4bea7"/>
<rect x="306" y="322" width="384" height="268" fill="url(#p5g)" opacity="0.55"/>
<g fill="#b7cbb8" stroke="#5d7562" stroke-width="3">
<rect x="392" y="322" width="18" height="268"/><rect x="488" y="322" width="18" height="268"/><rect x="582" y="322" width="18" height="268"/>
</g>
<g stroke="#7f9c84" stroke-width="2.5"><line x1="306" y1="452" x2="690" y2="452"/><line x1="306" y1="578" x2="690" y2="578"/><line x1="306" y1="334" x2="690" y2="334"/></g>
<rect x="306" y="322" width="384" height="268" fill="none" stroke="#6d7f70" stroke-width="3"/>
<rect x="676" y="322" width="14" height="268" fill="#88a78d"/>
<!-- base panel -->
<rect x="306" y="592" width="384" height="10" fill="#dadada" stroke="#777" stroke-width="2"/>
<rect x="314" y="606" width="368" height="78" fill="#fefefe" stroke="#8f8f8f" stroke-width="2"/>
<g stroke="#aaa" stroke-width="2"><line x1="392" y1="606" x2="392" y2="684"/><line x1="544" y1="592" x2="544" y2="690"/><line x1="670" y1="606" x2="670" y2="684"/></g>
<rect x="490" y="596" width="14" height="82" fill="#d0d0d0" stroke="#888" stroke-width="1.5"/>
<circle cx="344" cy="650" r="5" fill="none" stroke="#999" stroke-width="1.5"/>
<!-- ground lines -->
<g stroke="#8a8a8a" stroke-width="2.5"><line x1="176" y1="692" x2="890" y2="692"/><line x1="176" y1="766" x2="900" y2="766"/></g>
<g stroke="#bdbdbd" stroke-width="2"><line x1="730" y1="656" x2="888" y2="656"/><line x1="292" y1="720" x2="560" y2="720"/><line x1="740" y1="740" x2="888" y2="740"/></g>
<!-- dimension lines -->
<line x1="886" y1="396" x2="886" y2="752" stroke="#8a8a8a" stroke-width="2.5"/>
<g stroke="#9a9a9a" stroke-width="1.8" stroke-dasharray="8 5"><line x1="456" y1="62" x2="456" y2="772"/><line x1="542" y1="600" x2="542" y2="772"/><line x1="340" y1="690" x2="340" y2="772"/><line x1="596" y1="120" x2="596" y2="300"/></g>
<path d="M446 68 H500 M536 710 H566 M496 744 H566 M440 772 H566" stroke="#666" stroke-width="2"/>
<path d="M486 168 q20 -14 36 0 M500 150 l18 20" stroke="#bbb" stroke-width="2" fill="none"/>
<!-- arrows -->
<g stroke="#111" stroke-width="7" stroke-linecap="round"><line x1="798" y1="226" x2="814" y2="240"/><line x1="798" y1="256" x2="814" y2="270"/></g>
<g stroke="#777" stroke-width="2"><line x1="770" y1="240" x2="800" y2="230"/><line x1="770" y1="252" x2="800" y2="262"/></g>
<!-- text -->
<g fill="#2b2b2b" font-size="20" font-weight="bold">
<text x="506" y="68" textLength="254">Hinged louvered shutters;</text>
<text x="506" y="97" textLength="316">Bifold to open toward wall and</text>
<text x="506" y="126" textLength="128">front column</text>
<text x="804" y="330" font-size="21" textLength="82">btm of</text>
<text x="566" y="716" textLength="222">34" high capped wall</text>
<text x="566" y="746" textLength="178">5/4 x ripped cap</text>
<text x="566" y="776" textLength="250">5/4x4 stiles and rails w/</text>
</g>
</svg></div>
<!--T6--><div class="abs thumb" id="t6" style="left:536.25px;top:388.25px"><svg preserveAspectRatio="none" viewBox="34.2 40.0 1000.9 750">
<defs>
<pattern id="p6t" width="22" height="22" patternUnits="userSpaceOnUse"><path d="M0 0 H22 M0 0 V22" stroke="#d0d0d0" stroke-width="1.6" fill="none"/></pattern>
</defs>
<rect x="0" y="0" width="1100" height="850" fill="#fff"/>
<!-- faint context lines -->
<g fill="none" stroke="#ededed" stroke-width="6">
<path d="M120 60 L150 130 M210 60 L225 140 M300 60 L310 120 M420 60 L440 130 M500 60 L520 130 M660 60 L650 110"/>
<path d="M870 140 Q960 150 1030 200 M900 170 Q980 190 1036 250"/>
<path d="M960 640 L940 780 M990 640 L975 780 M1020 640 L1005 780 M930 660 L905 780"/>
<path d="M60 620 H250 M60 470 H200"/>
</g>
<path d="M940 380 L900 760" stroke="#e3e3e3" stroke-width="10" fill="none"/>
<!-- yard -->
<path d="M110 206 H880 Q905 206 908 232 L925 410 L905 610 L545 652 L110 722 Q80 724 78 690 L76 250 Q78 208 110 206 Z" fill="#e8ebe3"/>
<path d="M78 430 H200 V500 H78 Z" fill="#f1f2ee"/>
<!-- patio -->
<path d="M250 412 H540 V660 L250 690 Z" fill="#edeee6"/>
<path d="M250 412 H540 V445 H250 Z" fill="#f1ebe6"/>
<rect x="412" y="470" width="110" height="170" fill="#ebede3"/>
<!-- pool -->
<rect x="302" y="470" width="116" height="190" fill="#f5f5f2" stroke="#c4c4c4" stroke-width="2"/>
<rect x="312" y="478" width="98" height="172" fill="#cfe1f6"/>
<!-- house floor -->
<path d="M132 277 H850 V548 H770 V596 H545 V412 H238 V410 H132 Z" fill="#fdfdfd"/>
<path d="M545 277 H770 V596 H545 Z" fill="url(#p6t)"/>
<path d="M132 277 H540 V410 H132 Z" fill="url(#p6t)" opacity="0.7"/>
<rect x="772" y="282" width="76" height="264" fill="#f4ecea"/>
<!-- garage -->
<rect x="126" y="510" width="144" height="146" fill="#cbcbcb"/>
<rect x="126" y="580" width="144" height="76" fill="#d3d3d3"/>
<!-- walls -->
<g fill="none" stroke="#303030" stroke-width="5.2" stroke-linejoin="miter">
<path d="M132 277 H236 M250 277 H336 M350 277 H540 M545 277 H630 M660 277 H735 M750 277 H850"/>
<path d="M132 277 V330 M132 350 V410 H238 V380"/>
<path d="M238 277 V300 M238 330 V372 H290 V350 M284 280 V340 M330 280 V320"/>
<path d="M346 277 V372 H300 M346 372 H380 M390 380 H450 V350 M450 277 V330 H520 V352 H470"/>
<path d="M420 408 H520 M540 277 V400 M540 450 V470"/>
<path d="M630 277 V326 M735 277 V360 H690 M655 374 H740"/>
<path d="M626 450 V500 M626 560 V596 M545 596 H600 M650 596 H770 V548"/>
<path d="M850 277 V548 H780"/>
<path d="M126 510 H196 V496 M210 494 H272 M272 494 V656 H205 M185 656 H126 V510"/>
</g>
<g fill="none" stroke="#555" stroke-width="3">
<path d="M196 412 V486 H240 M545 412 V596 M545 520 H520 V660"/>
<path d="M150 300 H190 V360 H150 Z M380 290 H420 V320 H380 Z M560 300 H620 V350 H560 Z"/>
</g>
<g fill="none" stroke="#8d8d8d" stroke-width="2.5">
<rect x="565" y="410" width="44" height="28" rx="8"/><rect x="672" y="410" width="56" height="30" rx="6"/><rect x="560" y="490" width="50" height="50"/><rect x="660" y="500" width="80" height="40"/><circle cx="660" cy="552" r="10"/>
<rect x="800" y="400" width="30" height="22" rx="8" stroke="#c99"/>
</g>
<g fill="#2a2a2a"><rect x="768" y="376" width="9" height="9"/><rect x="768" y="430" width="9" height="9"/><rect x="768" y="484" width="9" height="9"/><rect x="768" y="536" width="9" height="9"/><rect x="540" y="450" width="9" height="9"/></g>
<!-- trees -->
<g fill="#d8dfd0" stroke="#7c8478" stroke-width="2.5">
<circle cx="290" cy="186" r="50"/><circle cx="190" cy="240" r="34"/><circle cx="400" cy="236" r="30"/><circle cx="500" cy="236" r="28"/>
<circle cx="550" cy="186" r="24"/><circle cx="590" cy="184" r="30"/><circle cx="624" cy="186" r="20"/>
<circle cx="690" cy="242" r="26"/><circle cx="822" cy="596" r="46"/>
</g>
<g fill="#adb5a8" opacity="0.75"><ellipse cx="745" cy="205" rx="44" ry="50"/><ellipse cx="920" cy="320" rx="44" ry="48"/><ellipse cx="900" cy="585" rx="40" ry="46"/></g>
<g fill="#dbe2d3" stroke="#6e766a" stroke-width="3">
<path d="M718 186 q4 -50 58 -58 q56 4 60 56 q-2 54 -58 60 q-54 -4 -60 -58z"/>
<path d="M908 296 q4 -52 58 -60 q58 4 62 58 q-2 56 -60 62 q-54 -4 -60 -60z"/>
<path d="M878 560 q4 -52 58 -58 q56 4 60 56 q-2 54 -58 60 q-54 -4 -60 -58z"/>
</g>
<g fill="#444"><circle cx="776" cy="186" r="4"/><circle cx="968" cy="296" r="4"/><circle cx="936" cy="560" r="4"/><circle cx="290" cy="186" r="3"/></g>
<g fill="#fff" stroke="#d8d8d8" stroke-width="2"><circle cx="448" cy="186" r="16"/><circle cx="494" cy="186" r="13"/></g>
<!-- notes -->
<g stroke="#8a8a8a" stroke-width="3" stroke-dasharray="4 3"><line x1="628" y1="632" x2="628" y2="690"/><line x1="640" y1="632" x2="640" y2="712"/><line x1="652" y1="632" x2="652" y2="680"/><line x1="662" y1="632" x2="662" y2="668"/><line x1="704" y1="626" x2="704" y2="752"/><line x1="716" y1="626" x2="716" y2="752"/></g>
<path d="M740 690 H830 M620 720 H700" stroke="#d2d2d2" stroke-width="4"/>
</svg></div>
<!--T7--><div class="abs thumb" id="t7" style="left:761.5px;top:388.25px"><svg preserveAspectRatio="none" viewBox="35.4 35 1000.9 750" font-family="Liberation Sans, sans-serif">
<defs>
<pattern id="p7t" width="26" height="26" patternUnits="userSpaceOnUse"><path d="M0 0 H26 M0 0 V26" stroke="#d6d6d6" stroke-width="1.6" fill="none"/></pattern>
<pattern id="p7s" width="10" height="9" patternUnits="userSpaceOnUse"><rect width="10" height="3" fill="#b9b9b9"/></pattern>
</defs>
<rect x="0" y="0" width="1100" height="850" fill="#e4edca"/>
<path d="M30 40 H78 L40 178 H30 Z" fill="#fdfdfd" stroke="#b5b5b5" stroke-width="2"/>
<rect x="110" y="306" width="44" height="330" fill="#d9e2c2"/>
<rect x="800" y="590" width="212" height="36" fill="#d4dfbb"/>
<rect x="160" y="110" width="40" height="200" fill="#d9e2c2"/>
<!-- top lot strip -->
<rect x="425" y="54" width="528" height="80" fill="#f7f7f5"/>
<g fill="none" stroke="#c4c4c4" stroke-width="2"><path d="M470 66 V110 H520 V66 M760 66 V120 M820 66 V110 H900 M860 66 V100 M600 66 V130 M940 66 V126"/></g>
<!-- house floor -->
<path d="M246 56 H425 V134 H950 V320 H950 V576 H786 V628 H350 V600 H150 V336 H192 V132 H246 Z" fill="#fcfcfc"/>
<path d="M150 336 H786 V600 H150 Z" fill="url(#p7t)" opacity="0.8"/>
<path d="M270 134 H420 V316 H270 Z" fill="url(#p7t)" opacity="0.8"/>
<!-- lanai -->
<rect x="428" y="142" width="352" height="160" fill="#e9e9e9"/>
<g stroke="#fbfbfb" stroke-width="5"><line x1="518" y1="142" x2="518" y2="302"/><line x1="624" y1="142" x2="624" y2="302"/><line x1="720" y1="142" x2="720" y2="302"/></g>
<!-- master -->
<rect x="790" y="140" width="156" height="174" fill="#fafafa"/>
<rect x="790" y="140" width="156" height="174" fill="url(#p7t)"/>
<rect x="800" y="180" width="90" height="80" fill="#f2f2f2" stroke="#c4c4c4" stroke-width="2"/>
<!-- porch -->
<path d="M226 612 H350 V630 H700 V612 H716 V752 H226 Z" fill="#f4f4f2"/>
<rect x="246" y="640" width="450" height="100" fill="#f9f9f7" stroke="#c9c9c9" stroke-width="2"/>
<path d="M214 752 H720 L700 782 H230 Z" fill="#a5a5a0"/>
<rect x="520" y="752" width="90" height="34" fill="#d8d8d4"/>
<path d="M214 620 H244 V752 H214 Z" fill="#9aa08c" opacity="0.8"/>
<path d="M716 640 H740 V760 H716 Z" fill="#b9c2a6" opacity="0.8"/>
<!-- left wall shadow -->
<rect x="134" y="336" width="16" height="280" fill="#8a8a8a"/>
<rect x="128" y="600" width="120" height="22" fill="#8d9282"/>
<!-- walls -->
<g fill="none" stroke="#303030" stroke-width="5.2">
<path d="M246 60 H300 M330 60 H425 V134"/>
<path d="M246 60 V134 H192 V320"/>
<path d="M270 134 V320 M192 200 H270 M192 262 H270 M192 320 H270 V348"/>
<path d="M316 60 V134 M316 134 H425"/>
<path d="M420 134 V316 M420 142 H950 V320"/>
<path d="M420 306 H452 M500 306 H545 M600 316 H640 M700 306 H740 M770 306 H790"/>
<path d="M784 134 V320"/>
<path d="M150 336 H270 M150 336 V600 H250 M290 600 H350 V628 H540 M612 628 H786 V576 H950 V320"/>
<path d="M528 380 V548 M612 480 H786 M612 480 V500 M612 590 V628"/>
<path d="M786 366 V576 M830 320 V400 H786 M830 486 H950 M880 340 H950 M880 430 H950"/>
</g>
<g fill="#262626">
<rect x="346" y="306" width="10" height="10"/><rect x="404" y="306" width="10" height="10"/><rect x="520" y="306" width="10" height="10"/><rect x="606" y="376" width="10" height="10"/>
<rect x="246" y="736" width="10" height="10"/><rect x="346" y="736" width="10" height="10"/><rect x="432" y="736" width="10" height="10"/><rect x="516" y="736" width="10" height="10"/><rect x="612" y="736" width="10" height="10"/><rect x="690" y="736" width="10" height="10"/>
<rect x="440" y="620" width="10" height="10"/><rect x="526" y="620" width="10" height="10"/><rect x="690" y="620" width="10" height="10"/>
</g>
<!-- furniture -->
<g fill="none" stroke="#6e6e6e" stroke-width="3">
<rect x="336" y="176" width="48" height="104" rx="22"/>
<rect x="232" y="420" width="56" height="100"/><rect x="244" y="446" width="30" height="46" fill="#fff"/>
<rect x="336" y="400" width="32" height="140"/>
<path d="M336 428 H368 M336 456 H368 M336 484 H368 M336 512 H368"/>
<rect x="406" y="458" width="56" height="36"/><rect x="390" y="510" width="94" height="34"/>
<path d="M412 510 V544 M436 510 V544 M460 510 V544"/>
<rect x="510" y="400" width="16" height="140"/>
<path d="M456 400 l20 -14 l16 22 l-20 14 z"/>
<path d="M386 596 l18 -18 l18 18 l-18 18 z M460 596 l18 -18 l18 18 l-18 18 z"/>
<path d="M624 418 l22 -18 l22 18 M684 418 l22 -18 l22 18 M620 430 H730"/>
<rect x="730" y="390" width="50" height="46"/>
<rect x="800" y="386" width="26" height="46"/><rect x="792" y="440" width="30" height="38"/>
<rect x="884" y="330" width="56" height="30"/><rect x="888" y="440" width="50" height="36"/>
</g>
<g stroke="#8a8a8a" stroke-width="2" fill="none"><path d="M560 316 L596 348 M830 320 L800 350 M850 470 L880 500 M586 596 L556 620 M286 60 L316 90"/></g>
<!-- right stairs -->
<rect x="966" y="340" width="44" height="112" fill="#ededed" stroke="#b5b5b5" stroke-width="2"/>
<rect x="966" y="340" width="44" height="112" fill="url(#p7s)"/>
<rect x="966" y="386" width="44" height="14" fill="#f4f4f0"/>
<!-- labels -->
<text x="548" y="124" font-size="46" fill="#fafafa" stroke="#adadad" stroke-width="2" textLength="172">LOT 360</text>
<g fill="#2e2e2e" font-size="17" font-weight="bold">
<text x="312" y="174" textLength="60">DINING</text><text x="312" y="212" font-size="19" textLength="100">12'0 X 15'0</text>
<text x="446" y="180" textLength="52">LANAI</text><text x="446" y="214" font-size="19" textLength="100">29'4 X 12'4</text>
<text x="800" y="172" textLength="66">MASTER</text><text x="800" y="204" font-size="19" textLength="90">15'0 X 15'8</text>
<text x="190" y="388" textLength="72">KITCHEN</text><text x="190" y="414" font-size="19" textLength="98">15'0 X 12'3</text>
<text x="372" y="386" textLength="84">GREAT RM</text><text x="372" y="412" font-size="19" textLength="96">19'4 X 20'0</text>
<text x="640" y="520" textLength="54">OFFICE</text><text x="640" y="552" font-size="19" textLength="98">12'4 X 11'0</text>
<text x="806" y="520" textLength="32">BR2</text><text x="806" y="546" font-size="16" textLength="68">10'0 X 11'4</text>
</g>
</svg></div>
<!--T8--><div class="abs thumb" id="t8" style="left:987px;top:388.25px"><svg preserveAspectRatio="none" viewBox="38.2 40.0 1000.9 750" font-family="Liberation Sans, sans-serif">
<defs>
<filter id="b8" x="-20%" y="-20%" width="140%" height="140%"><feGaussianBlur stdDeviation="14"/></filter>
<filter id="b8s" x="-20%" y="-20%" width="140%" height="140%"><feGaussianBlur stdDeviation="5"/></filter>
<filter id="n8" x="0" y="0" width="100%" height="100%"><feTurbulence type="fractalNoise" baseFrequency="0.035" numOctaves="3" seed="7" result="t"/><feColorMatrix in="t" type="matrix" values="0 0 0 0 0  0 0 0 0 0  0 0 0 0 0  1.6 0 0 0 -0.55"/></filter>
<clipPath id="c8"><rect x="335" y="178" width="683" height="510"/></clipPath>
</defs>
<rect x="0" y="0" width="1100" height="850" fill="#3d352b"/>
<g filter="url(#b8)">
<path d="M30 50 L300 90 L340 300 L300 430 L30 430 Z" fill="#5d4a40"/>
<ellipse cx="170" cy="270" rx="90" ry="70" fill="#6b574b"/>
<ellipse cx="90" cy="130" rx="50" ry="50" fill="#4a4034"/>
<ellipse cx="180" cy="100" rx="75" ry="55" fill="#33472e"/>
<ellipse cx="350" cy="130" rx="110" ry="50" fill="#283624"/>
<ellipse cx="250" cy="250" rx="70" ry="90" fill="#222e1e"/>
<ellipse cx="300" cy="110" rx="40" ry="30" fill="#394c31"/>
<rect x="500" y="40" width="70" height="140" fill="#5b4736"/>
<ellipse cx="640" cy="110" rx="80" ry="70" fill="#20291c"/>
<ellipse cx="790" cy="120" rx="90" ry="55" fill="#32452c"/>
<ellipse cx="800" cy="140" rx="30" ry="26" fill="#47643c"/>
<rect x="880" y="40" width="180" height="140" fill="#53412f"/>
<ellipse cx="920" cy="100" rx="36" ry="40" fill="#3a3226"/>
<ellipse cx="170" cy="520" rx="170" ry="80" fill="#273423"/>
<ellipse cx="80" cy="470" rx="50" ry="40" fill="#30422b"/>
<ellipse cx="210" cy="600" rx="70" ry="40" fill="#394930"/>
<path d="M30 620 L320 600 L330 800 L30 800 Z" fill="#4d4a35"/>
<ellipse cx="280" cy="720" rx="60" ry="60" fill="#4b3b2e"/>
<ellipse cx="150" cy="760" rx="50" ry="26" fill="#2c3423"/>
<rect x="330" y="690" width="720" height="110" fill="#2f2a21"/>
<ellipse cx="520" cy="745" rx="130" ry="45" fill="#293524"/>
<ellipse cx="860" cy="745" rx="180" ry="40" fill="#473828"/>
<rect x="1016" y="178" width="40" height="520" fill="#2b2b21"/>
</g>
<rect x="0" y="0" width="1100" height="850" fill="#000" filter="url(#n8)" opacity="0.55"/>
<!-- roads outside -->
<path d="M480 40 Q486 110 476 182" fill="none" stroke="#8a8c88" stroke-width="18"/>
<path d="M340 476 Q270 520 190 548 Q100 580 40 640" fill="none" stroke="#83857f" stroke-width="11"/>
<path d="M60 640 L44 720" fill="none" stroke="#777a70" stroke-width="10"/>
<!-- house bottom-left -->
<g filter="url(#b8s)"><path d="M62 690 L120 650 L152 690 L100 742 Z" fill="#7f8790"/><path d="M78 690 L118 664 L136 690 L100 722 Z" fill="#646c78"/><ellipse cx="60" cy="740" rx="18" ry="14" fill="#a59a84"/></g>
<!-- overlay -->
<rect x="335" y="178" width="683" height="510" fill="#d8d8d4" opacity="0.93"/>
<g clip-path="url(#c8)">
<ellipse cx="560" cy="590" rx="200" ry="80" fill="#cfcfcb" filter="url(#b8)"/>
<ellipse cx="800" cy="250" rx="120" ry="50" fill="#e1e1dd" filter="url(#b8)"/>
<path d="M478 178 Q470 260 440 330 Q400 420 336 486" fill="none" stroke="#b9b9b5" stroke-width="24"/>
<path d="M466 178 Q458 260 428 326 Q390 410 336 466 M492 182 Q482 266 452 336 Q412 430 345 500" fill="none" stroke="#efefec" stroke-width="4"/>
<path d="M452 310 Q540 312 600 326 Q660 350 692 386" fill="none" stroke="#f4f4f1" stroke-width="9"/>
<path d="M456 292 Q600 296 690 340 M520 232 Q660 268 800 262 Q860 250 900 236" fill="none" stroke="#b5b5b1" stroke-width="2.5"/>
<path d="M700 470 Q780 440 880 470 Q910 520 880 570 Q780 590 720 540 Z" fill="#c5d2ba" opacity="0.8"/>
<g fill="#7b7b7b" filter="url(#b8s)">
<ellipse cx="438" cy="400" rx="42" ry="30"/><ellipse cx="400" cy="420" rx="20" ry="14"/><ellipse cx="540" cy="368" rx="36" ry="17"/><ellipse cx="580" cy="260" rx="24" ry="30"/><ellipse cx="482" cy="204" rx="26" ry="18"/>
<ellipse cx="664" cy="348" rx="26" ry="13"/><ellipse cx="596" cy="432" rx="28" ry="22"/><ellipse cx="660" cy="466" rx="24" ry="34"/><ellipse cx="732" cy="492" rx="18" ry="30"/>
<ellipse cx="824" cy="524" rx="42" ry="26"/><ellipse cx="850" cy="460" rx="44" ry="17"/><ellipse cx="940" cy="468" rx="34" ry="22"/><ellipse cx="930" cy="528" rx="18" ry="26"/><ellipse cx="700" cy="228" rx="22" ry="14" fill="#a3a3a3"/>
<ellipse cx="500" cy="380" rx="30" ry="12"/>
</g>
<g fill="none" stroke="#8a8a8a" stroke-width="3.5"><path d="M560 400 Q600 440 640 500 Q690 560 780 580 M680 540 L820 600 M800 300 Q840 260 880 300 Q860 340 820 330"/></g>
<g fill="none" stroke="#a9a9a5" stroke-width="3"><path d="M940 200 Q970 260 950 330 Q980 400 960 450 M980 196 Q1000 300 990 440 M500 640 Q640 600 820 640 Q900 650 1000 620"/></g>
<circle cx="697" cy="390" r="20" fill="#e6e6e2" stroke="#fbfbf8" stroke-width="9"/>
<g fill="#fafaf8"><rect x="748" y="368" width="52" height="30"/><rect x="752" y="402" width="56" height="26"/><rect x="730" y="340" width="40" height="20"/></g>
<rect x="764" y="434" width="30" height="14" fill="#7c9cd4"/>
<g fill="#5a5a5a"><rect x="640" y="338" width="34" height="16"/><rect x="676" y="342" width="22" height="14"/></g>
</g>
<!-- compass -->
<circle cx="172" cy="449" r="80" fill="none" stroke="#cfcfc6" stroke-width="4.5" opacity="0.75"/>
<g stroke="#dcdcd4" stroke-width="7" stroke-linecap="butt" opacity="0.95">
<line x1="172" y1="449" x2="116" y2="393"/><line x1="172" y1="449" x2="230" y2="391"/><line x1="172" y1="449" x2="116" y2="507"/><line x1="172" y1="449" x2="230" y2="507"/>
</g>
<g fill="#ecece6">
<path d="M172 338 L178.5 446 L172 542 L165.5 446 Z"/>
<path d="M66 449 L168 442.5 L258 449 L168 455.5 Z"/>
</g>
<text x="172" y="322" font-size="44" font-weight="bold" fill="#e8e8e2" text-anchor="middle" transform="rotate(-14 172 306)">N</text>
</svg></div>

<div class="abs ttl" style="left:311px;top:311px">Concept Proposal</div>
<div class="abs dt" style="left:312px;top:333px">12/12/22, 9:32 AM</div>
<div class="abs ttl" style="left:537px;top:311px">Elevation - Option 1</div>
<div class="abs dt" style="left:537px;top:333px">12/12/22, 9:32 AM</div>
<div class="abs ttl" style="left:762px;top:311px">Elevation - Option 2</div>
<div class="abs dt" style="left:762px;top:333px">12/12/22, 9:32 AM</div>
<div class="abs ttl" style="left:987px;top:311px">Elevation - Option 3</div>
<div class="abs dt" style="left:988px;top:333px">12/12/22, 9:32 AM</div>

<div class="abs ttl" style="left:311px;top:537px">Elevation Detail</div>
<div class="abs dt" style="left:312px;top:559px">12/12/22, 9:32 AM</div>
<div class="abs ttl" style="left:537px;top:537px">Plan - Option 1</div>
<div class="abs dt" style="left:537px;top:559px">12/12/22, 9:32 AM</div>
<div class="abs ttl" style="left:762px;top:537px">Plan - Option 2</div>
<div class="abs dt" style="left:762px;top:559px">12/12/22, 9:32 AM</div>
<div class="abs ttl" style="left:987px;top:537px">Site Plan - Option 1</div>
<div class="abs dt" style="left:988px;top:559px">12/12/22, 9:32 AM</div>

<div class="abs" style="left:501px;top:229px;font-size:12.5px;line-height:14px;color:#dcdcdc;letter-spacing:-0.4px;">+3</div>

<div id="home" class="abs"></div>
<div id="botline" class="abs"></div>
</div>
</body>
</html>
